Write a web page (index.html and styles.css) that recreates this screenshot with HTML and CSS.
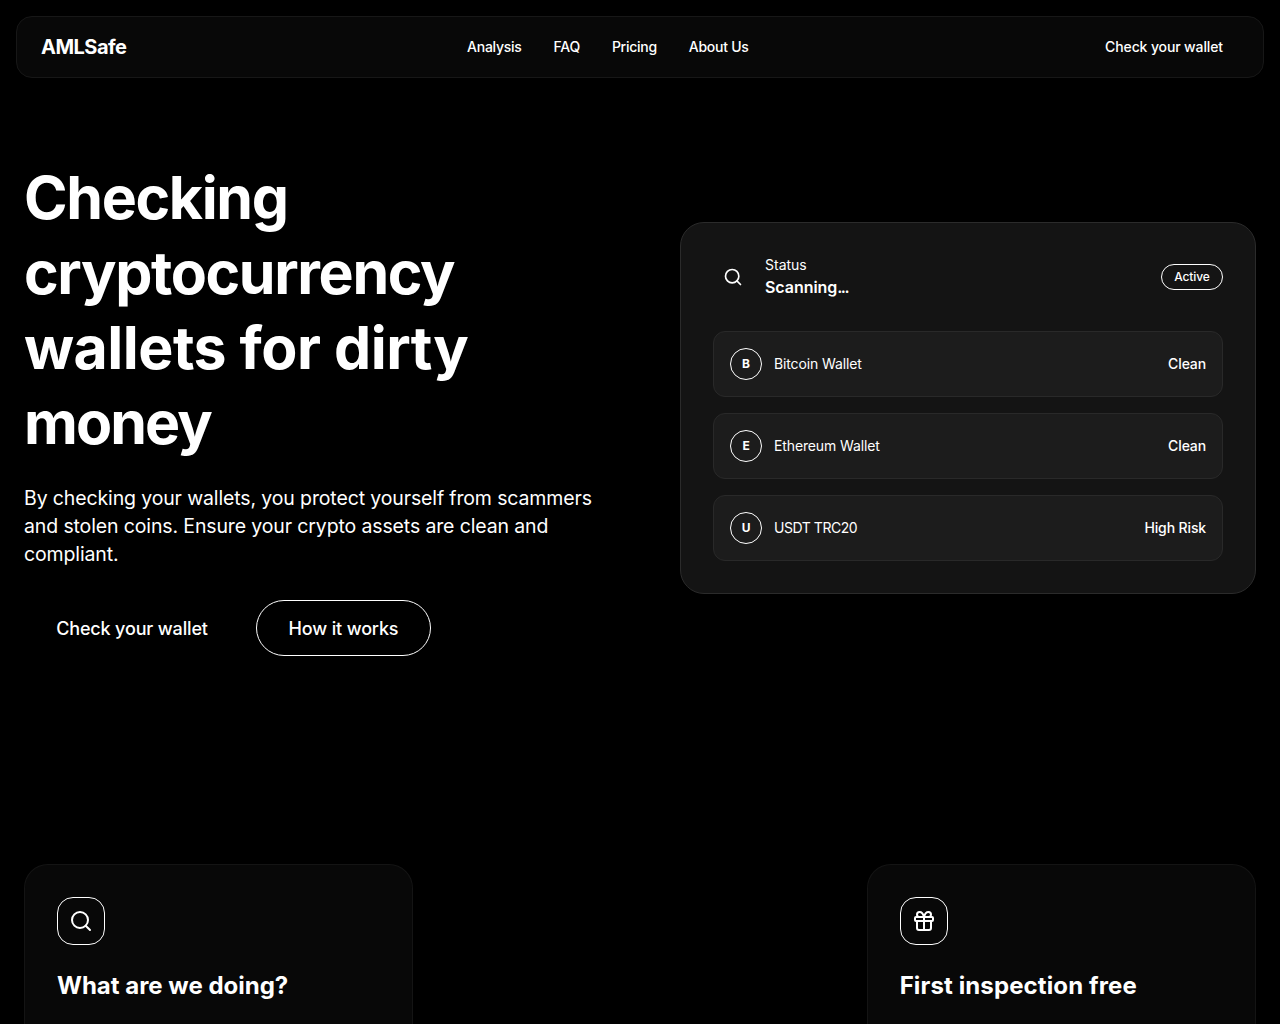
FILE: index.html
```html
<!DOCTYPE html>
<html lang="en">

<head>
	<meta charset="UTF-8">
	<title>AMLSafe</title>
	<link rel="stylesheet" href="styles.css">
</head>

<body>
	<header class="header">
		<div class="logo">AMLSafe</div>
		<nav class="nav">
			<a>Analysis</a>
			<a>FAQ</a>
			<a>Pricing</a>
			<a>About Us</a>
		</nav>
		<a class="headerButton">Check your wallet</a>
	</header>

	<main>
		<section class="hero">
			<div class="heroText">
				<h1>
					<span>Checking</span>
					<span>cryptocurrency</span>
					<span class="wide">wallets for dirty</span>
					<span class="narrow">money</span>
				</h1>
				<p>By checking your wallets, you protect yourself from scammers<br>and stolen coins. Ensure your crypto assets are clean and<br>compliant.</p>
				<div class="buttons">
					<a class="button buttonCheck">Check your wallet</a>
					<a class="button buttonHow">How it works</a>
				</div>
			</div>

			<div class="scanner">
				<div class="scannerHead">
					<div class="scannerIcon">
						<svg width="20" height="20" viewBox="0 0 24 24" fill="none" stroke="currentColor" stroke-width="2" stroke-linecap="round" stroke-linejoin="round">
							<circle cx="11" cy="11" r="8"></circle>
							<path d="m21 21-4.3-4.3"></path>
						</svg>
					</div>
					<div>
						<div class="statusLabel">Status</div>
						<div class="statusValue">Scanning<span class="dots">...</span></div>
					</div>
					<div class="badge">Active</div>
				</div>
				<div class="wallets">
					<div class="wallet">
						<div class="coin">B</div>
						<div class="walletName">Bitcoin Wallet</div>
						<div class="result">Clean</div>
					</div>
					<div class="wallet">
						<div class="coin">E</div>
						<div class="walletName">Ethereum Wallet</div>
						<div class="result">Clean</div>
					</div>
					<div class="wallet">
						<div class="coin">U</div>
						<div class="walletName caps">USDT TRC20</div>
						<div class="result">High Risk</div>
					</div>
				</div>
			</div>
		</section>

		<section class="cards">
			<div class="card">
				<div class="cardIcon">
					<svg width="24" height="24" viewBox="0 0 24 24" fill="none" stroke="currentColor" stroke-width="2" stroke-linecap="round" stroke-linejoin="round">
						<circle cx="11" cy="11" r="8"></circle>
						<path d="m21 21-4.3-4.3"></path>
					</svg>
				</div>
				<h2>What are we doing?</h2>
			</div>
			<div class="card cardLast">
				<div class="cardIcon">
					<svg width="24" height="24" viewBox="0 0 24 24" fill="none" stroke="currentColor" stroke-width="2" stroke-linecap="round" stroke-linejoin="round">
						<rect x="3" y="8" width="18" height="4" rx="1"></rect>
						<path d="M12 8v13"></path>
						<path d="M19 12v7a2 2 0 0 1-2 2H7a2 2 0 0 1-2-2v-7"></path>
						<path d="M7.5 8a2.5 2.5 0 0 1 0-5A4.8 8 0 0 1 12 8a4.8 8 0 0 1 4.5-5 2.5 2.5 0 0 1 0 5"></path>
					</svg>
				</div>
				<h2 class="titleFree">First inspection free</h2>
			</div>
		</section>
	</main>
</body>

</html>
```
FILE: styles.css
```css
* {
	box-sizing: border-box;
}

body {
	height: 1024px;
	margin: 0;
	padding: 16px 16px 0;
	overflow: hidden;

	background-color: #000;

	font-family: Inter, "Liberation Sans", sans-serif;
	color: #fff;
}

h1, h2, p {
	margin: 0;
}

svg {
	display: block;
}

.header {
	display: flex;
	align-items: center;
	justify-content: space-between;
	height: 62px;
	padding: 0 24px;

	border: 1px solid #171717;
	border-radius: 16px;
	background-color: #080808;

	font-size: 14px;
	font-weight: 500;
	line-height: 20px;
}

.logo {
	font-size: 20px;
	font-weight: 700;
	line-height: 28px;
	letter-spacing: -0.5px;
}

.nav {
	display: flex;
	gap: 32px;
	letter-spacing: -0.27px;
}

.headerButton {
	padding: 0 16px;
	letter-spacing: -0.12px;
}

.hero {
	display: grid;
	grid-template-columns: repeat(2, minmax(0, 1fr));
	gap: 80px;
	align-items: center;
	margin: 82px 8px 0;
}

h1 {
	margin-bottom: 24px;

	font-size: 59px;
	font-weight: 700;
	line-height: 75px;
	letter-spacing: -1.35px;
	white-space: nowrap;
}

h1 span {
	display: block;
}

h1 .wide {
	letter-spacing: -0.5px;
}

h1 .narrow {
	letter-spacing: -1.9px;
}

.heroText p {
	margin-bottom: 32px;

	font-size: 19.5px;
	line-height: 28px;
	letter-spacing: -0.13px;
	white-space: nowrap;
}

.buttons {
	display: flex;
	gap: 16px;
}

.button {
	height: 56px;
	border-radius: 28px;

	font-size: 18px;
	font-weight: 500;
	line-height: 58px;
	letter-spacing: -0.15px;
	text-align: center;
}

.buttonCheck {
	width: 216px;
}

.buttonHow {
	width: 175px;
	border: 1px solid #fff;
	line-height: 56px;
}

.scanner {
	height: 372px;
	padding: 32px;

	border: 1px solid #2b2b2b;
	border-radius: 24px;
	background-color: #141414;
}

.scannerHead {
	display: flex;
	align-items: center;
	height: 44px;
	margin-bottom: 32px;
}

.scannerIcon {
	width: 40px;
	margin-right: 12px;
	padding-left: 10px;
}

.statusLabel {
	font-size: 14px;
	line-height: 20px;
}

.statusValue {
	font-size: 16px;
	font-weight: 600;
	line-height: 24px;
	letter-spacing: -0.05px;
}

.dots {
	letter-spacing: -1.5px;
}

.badge {
	width: 62px;
	height: 26px;
	margin-left: auto;

	border: 1px solid #fff;
	border-radius: 13px;

	font-size: 12px;
	font-weight: 500;
	line-height: 24px;
	letter-spacing: -0.1px;
	text-align: center;
}

.wallets {
	display: flex;
	flex-direction: column;
	gap: 16px;
}

.wallet {
	display: flex;
	align-items: center;
	gap: 12px;
	height: 66px;
	padding: 0 16px;

	border: 1px solid #292929;
	border-radius: 12px;
	background-color: #1c1c1c;

	font-size: 14px;
	line-height: 20px;
	letter-spacing: -0.13px;
}

.coin {
	width: 32px;
	height: 32px;

	border: 1px solid #fff;
	border-radius: 50%;

	font-size: 12px;
	font-weight: 700;
	line-height: 30px;
	text-align: center;
}

.caps {
	letter-spacing: -0.45px;
}

.result {
	margin-left: auto;
	font-weight: 500;
}

.cards {
	display: grid;
	grid-template-columns: repeat(3, 1fr);
	gap: 32px;
	margin: 208px 8px 0;
}

.card {
	height: 160px;
	padding: 32px 32px 0;

	border: 1px solid #141414;
	border-bottom: 0;
	border-radius: 24px 24px 0 0;
	background-color: #080808;
}

.cardLast {
	grid-column: 3;
}

.cardIcon {
	display: flex;
	align-items: center;
	justify-content: center;
	width: 48px;
	height: 48px;
	margin-bottom: 24px;

	border: 1px solid #fff;
	border-radius: 16px;
}

h2 {
	font-size: 24px;
	font-weight: 700;
	line-height: 34px;
	white-space: nowrap;
}

.titleFree {
	letter-spacing: 0.12px;
}
```
